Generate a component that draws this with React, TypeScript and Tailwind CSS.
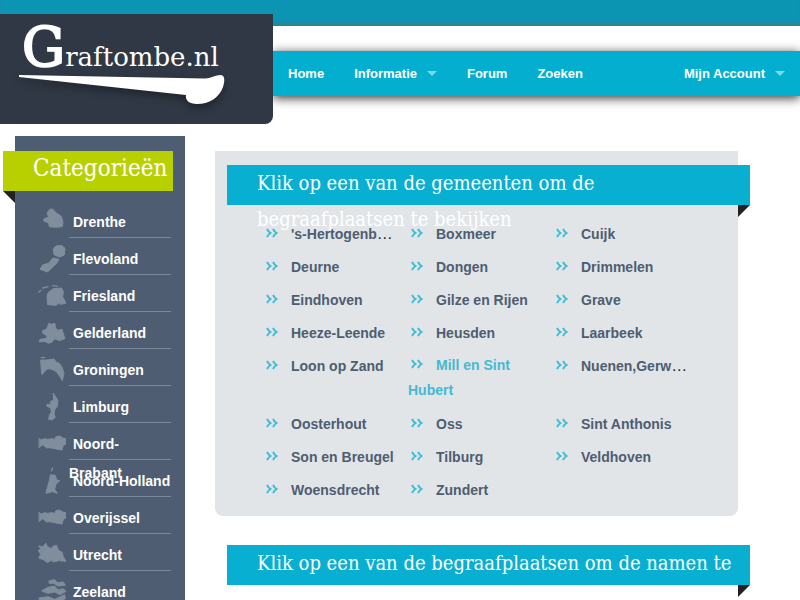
type Province = {
  name: string
  shapes: string[]
  islands?: string
}

const provinces: Province[] = [
  { name: 'Drenthe', shapes: ['M36 4L43 3L49 8L56 16L69 24L72 32L75 41L73 56L51 58L34 56L32 45L16 38L20 31L32 28L28 16Z'] },
  {
    name: 'Flevoland',
    shapes: [
      'M54 3L70 0L81 10L79 30L64 36L48 29L46 13Z',
      'M46 39L63 43L56 55L41 69L29 81L6 73L14 60L31 55Z',
    ],
  },
  {
    name: 'Friesland',
    shapes: ['M32 30L46 20L70 18L76 28L74 44L84 64L66 67L63 63L54 70L29 68L27 44Z'],
    islands: 'M1 31L9 25M15 18L30 14M44 11L58 13',
  },
  {
    name: 'Gelderland',
    shapes: ['M34 13L40 16L51 13L52 27L60 34L72 31L76 45L81 59L64 65L50 59L42 69L32 73L20 67L4 69L6 61L20 59L28 55L24 48L14 43L14 35L26 30L30 20Z'],
  },
  {
    name: 'Groningen',
    shapes: ['M9 12L26 12L48 9L54 18L64 22L72 34L78 52L73 74L66 62L54 46L36 38L26 40L12 56L10 42Z'],
    islands: 'M10 5L20 4',
  },
  {
    name: 'Limburg',
    shapes: ['M46 1L54 13L60 23L58 39L50 51L48 63L52 73L42 81L32 79L34 67L40 57L38 45L26 39L26 35L40 33L36 27L46 21Z'],
  },
  {
    name: 'Noord-Brabant',
    shapes: ['M4 26L10 30L20 26L28 28L42 26L50 28L54 20L66 18L74 24L84 26L84 42L76 46L72 60L50 56L36 53L26 54L14 44L4 52Z'],
  },
  {
    name: 'Noord-Holland',
    shapes: ['M38 23L52 25L56 39L66 41L54 51L50 67L58 79L44 74L24 79L28 61L34 41Z'],
    islands: 'M40 12L44 3',
  },
  {
    name: 'Overijssel',
    shapes: ['M4 26L10 30L20 26L28 28L42 26L50 28L54 20L66 18L74 24L84 26L84 42L76 46L72 60L50 56L36 53L26 54L14 44L4 52Z'],
  },
  {
    name: 'Utrecht',
    shapes: ['M2 15L14 17L24 7L28 17L40 23L44 16L56 13L62 29L72 33L76 47L84 61L62 59L46 63L40 58L28 65L18 57L2 51L8 39L0 29L8 24Z'],
  },
  {
    name: 'Zeeland',
    shapes: [
      'M34 8L50 5L58 14L76 12L82 22L60 24L48 16L34 16Z',
      'M12 38L30 28L50 24L60 36L76 32L84 40L66 50L50 42L30 46Z',
      'M4 60L30 56L50 64L80 50L82 62L56 76L30 70L6 72Z',
    ],
  },
]

const municipalities = [
  "'s-Hertogenbosch", 'Boxmeer', 'Cuijk',
  'Deurne', 'Dongen', 'Drimmelen',
  'Eindhoven', 'Gilze en Rijen', 'Grave',
  'Heeze-Leende', 'Heusden', 'Laarbeek',
  'Loon op Zand', 'Mill en Sint Hubert', 'Nuenen,Gerwen en Nederwetten',
  'Oosterhout', 'Oss', 'Sint Anthonis',
  'Son en Breugel', 'Tilburg', 'Veldhoven',
  'Woensdrecht', 'Zundert',
]

const active = 'Mill en Sint Hubert'

function NavLink({ label, menu = false }: { label: string; menu?: boolean }) {
  return (
    <a href="#" className="flex items-center gap-[10px] px-[15px]">
      {label}
      {menu && (
        <span className="h-0 w-0 border-x-[5px] border-t-[5px] border-x-transparent border-t-white/50" />
      )}
    </a>
  )
}

function Logo() {
  return (
    <a href="#" className="relative z-10 -mt-3 block h-[110px] w-[273px] shrink-0 rounded-br-lg bg-[#2f3844] pl-[19px] pt-[7px]">
      <span className="flex items-baseline pl-[3px] font-['DejaVu_Serif',serif] text-white">
        <span className="text-[54px] leading-[54px] [-webkit-text-stroke:2px_white]">G</span>
        <span className="text-[26px] leading-[54px]">raftombe.nl</span>
      </span>
      <svg className="-mt-[10px] block h-8 w-[206px] drop-shadow-[0_4px_4px_rgba(0,0,0,0.35)]" viewBox="0 0 206 32" fill="white">
        <path d="M0 1L186 4.500C193 4 196 1 202 1C206 1.500 206 7 204 13C200 24 190 30 178 30C170 30 166 26 167 21L0 3Z" />
      </svg>
    </a>
  )
}

function ProvinceIcon({ shapes, islands }: Omit<Province, 'name'>) {
  return (
    <svg className="h-7 w-7 shrink-0" viewBox="0 0 84 84" fill="#7f8d9c" stroke="#7f8d9c" strokeLinejoin="round" strokeLinecap="round">
      {shapes.map(d => <path key={d} d={d} strokeWidth="3" />)}
      {islands && <path d={islands} fill="none" strokeWidth="4" />}
    </svg>
  )
}

function Ribbon({ children }: { children: string }) {
  return (
    <div className="relative -mr-3 ml-3 h-10 bg-[#09afd0] pl-[30px] pr-[10px]">
      <h2 className="font-['DejaVu_Serif_Condensed','DejaVu_Serif',serif] text-[20px] leading-9 text-white">{children}</h2>
      <span className="absolute right-0 top-full h-0 w-0 border-r-[12px] border-t-[12px] border-r-transparent border-t-[#222]" />
    </div>
  )
}

export default function App() {
  return (
    <div className="min-h-screen bg-white font-['Liberation_Sans',Arial,sans-serif] text-[#222]">
      <header>
        <div className="h-[26px] bg-[#0c95b3] shadow-[inset_0_-4px_4px_-2px_rgba(100,100,100,0.5)]" />
        <div className="flex">
          <Logo />
          <nav className="mt-[25px] flex h-[45px] flex-1 justify-between bg-[#04aecf] text-[13px] font-bold text-white shadow-[0_2px_10px_rgba(0,0,0,0.8)]">
            <div className="flex">
              <NavLink label="Home" />
              <NavLink label="Informatie" menu />
              <NavLink label="Forum" />
              <NavLink label="Zoeken" />
            </div>
            <NavLink label="Mijn Account" menu />
          </nav>
        </div>
      </header>

      <div className="mt-3 flex pl-[15px]">
        {/* categorieën */}
        <aside className="w-[170px] shrink-0 bg-[#4e5d71] pb-6 pt-[15px]">
          <div className="relative -ml-3 mr-3 h-10 bg-[#b9d000] pl-[30px]">
            <h2 className="font-['DejaVu_Serif_Condensed','DejaVu_Serif',serif] text-[24px] leading-[34px] text-white">Categorieën</h2>
            <span className="absolute left-0 top-full h-0 w-0 border-l-[12px] border-t-[12px] border-l-transparent border-t-[#222]" />
          </div>
          <ul className="flex flex-col gap-[7px] pl-[23px] pr-[14px] pt-[17px] text-[14px] font-bold leading-[29px] text-white">
            {provinces.map(({ name, shapes, islands }) => (
              <li key={name} className="flex h-[30px] gap-[3px]">
                <ProvinceIcon shapes={shapes} islands={islands} />
                <a href="#" className="flex-1 border-b border-[#7b8999] indent-1">{name}</a>
              </li>
            ))}
          </ul>
        </aside>

        <main className="ml-[30px] mr-[62px] min-w-0 flex-1 pt-[15px]">
          {/* gemeenten */}
          <section className="rounded-b-lg bg-[#e1e5e8] pb-[14px] pt-[14px]">
            <Ribbon>Klik op een van de gemeenten om de begraafplaatsen te bekijken</Ribbon>
            <ul className="relative grid grid-cols-3 gap-x-[10px] gap-y-2 pl-12 pr-[50px] pt-4 text-[16px] leading-[25px]">
              {municipalities.map(name => (
                <li key={name} className={name === active ? 'text-[14px]' : 'h-[25px] truncate'}>
                  <a href="#" className={name === active ? 'text-[14px] font-bold text-[#45b9d2]' : 'text-[14px] font-bold text-[#4e5d71]'}>
                    <svg className="ml-[3px] mr-[13px] inline-block h-[11px] w-3 align-baseline" viewBox="0 0 12 11" fill="none" stroke="#3fbcd6" strokeWidth="2">
                      <path d="M1 1C2 3 3 4 4.500 5C3 6 2 7 1 9M7 1C8 3 9 4 10.500 5C9 6 8 7 7 9" />
                    </svg>
                    {name}
                  </a>
                </li>
              ))}
            </ul>
          </section>

          {/* begraafplaatsen */}
          <section className="pb-4 pt-[29px]">
            <Ribbon>Klik op een van de begraafplaatsen om de namen te</Ribbon>
          </section>
        </main>
      </div>
    </div>
  )
}
